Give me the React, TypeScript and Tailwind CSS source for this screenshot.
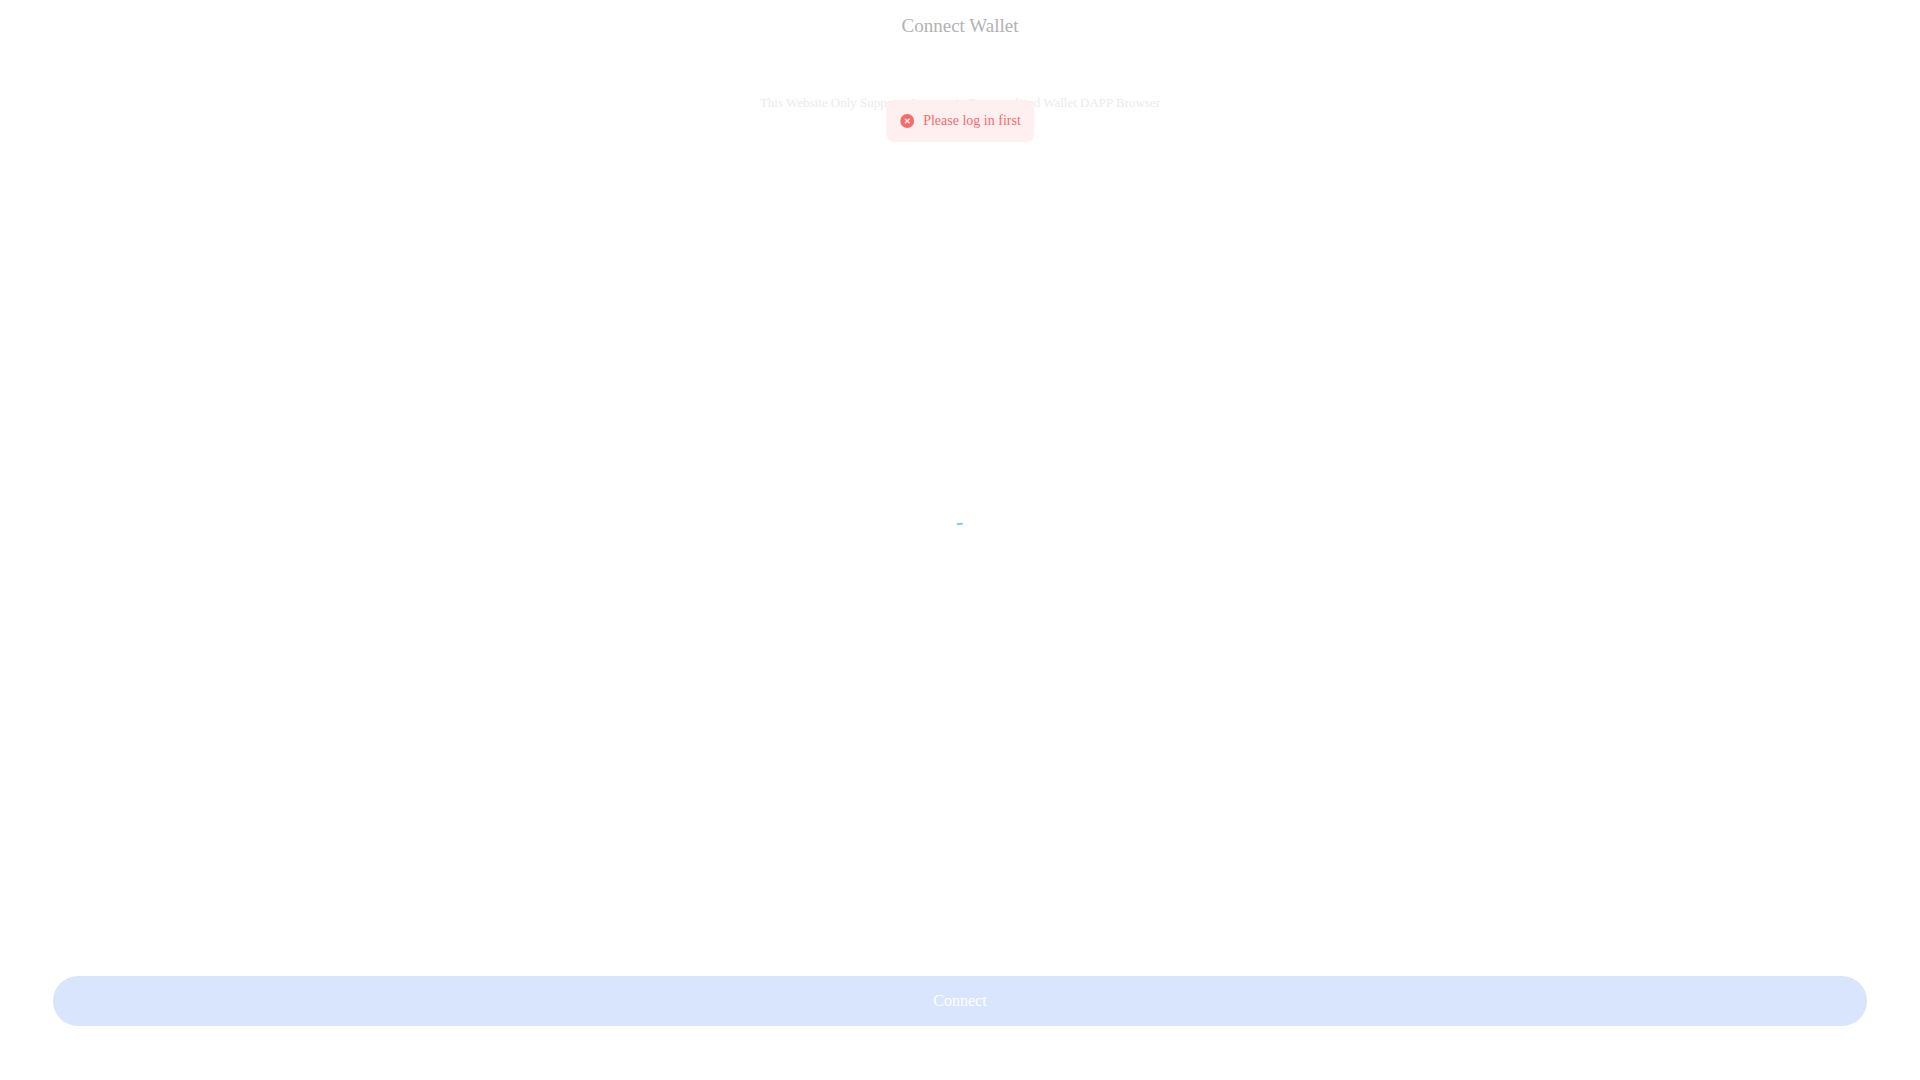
import { useId } from "react";

export default function App() {
  const titleId = useId();
  return (
    <main
      aria-labelledby={titleId}
      className="relative flex min-h-screen flex-col bg-white font-['Liberation_Serif',serif]"
    >
      <h1 id={titleId} className="pt-3 text-center text-[19px] leading-7 text-[#b2b2b2]">
        Connect Wallet
      </h1>
      <p className="mt-[55px] text-center text-[13px] leading-4 text-[#ebebeb]">
        This Website Only Supports Access via Decentralized Wallet DAPP Browser
      </p>
      <div className="flex flex-1 items-center justify-center pb-10">
        <svg width="8" height="4" viewBox="0 0 8 4" aria-hidden="true">
          <path d="M0.8 2.3Q3.5 1.7 6.8 1.7" fill="none" stroke="#80baf5" strokeWidth="1.7" />
        </svg>
      </div>
      <div className="px-[53px] pb-[54px]">
        <button type="button" className="h-[50px] w-full rounded-full bg-[#d9e5fd] text-base text-white">
          Connect
        </button>
      </div>
      <div
        role="alert"
        className="absolute top-[100px] left-1/2 flex h-[42px] -translate-x-1/2 items-center gap-[9px] rounded-lg bg-[#feeff0] pr-[13px] pl-[14px] text-sm whitespace-nowrap text-[#f56c6c]"
      >
        <svg width="14" height="14" viewBox="0 0 14 14" aria-hidden="true">
          <circle cx="7" cy="7" r="7" fill="#f56c6c" />
          <path d="M4.7 4.7l4.6 4.6M9.3 4.7L4.7 9.3" stroke="#feeff0" strokeWidth="1.3" />
        </svg>
        Please log in first
      </div>
    </main>
  );
}
